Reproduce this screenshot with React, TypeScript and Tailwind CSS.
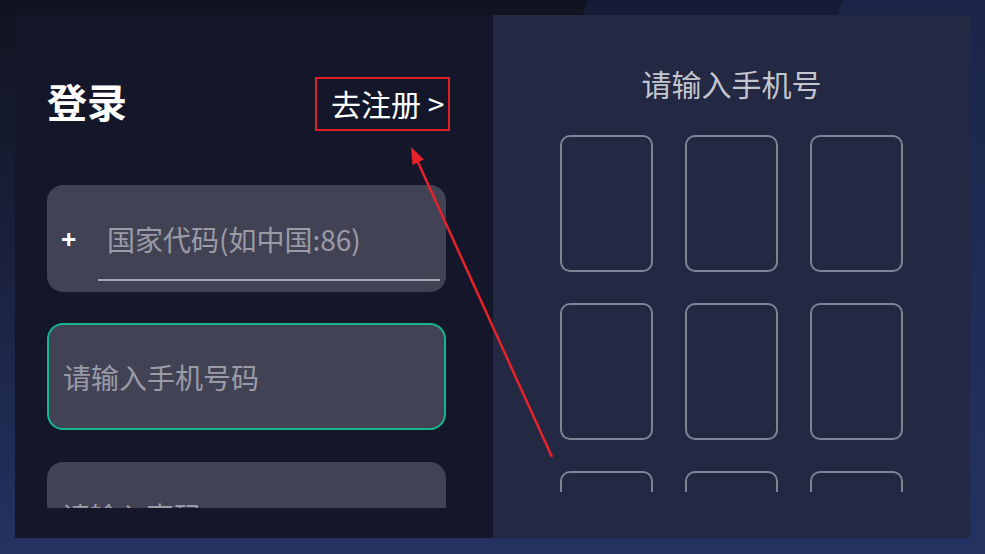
import React from "react";

export default function App() {
  const cards = Array.from({ length: 12 });
  return (
    <div className="relative w-[985px] h-[554px] overflow-hidden bg-[#243262] font-['Noto_Sans_CJK_SC','Noto_Sans',sans-serif]">
      {/* decorative background */}
      <div className="absolute inset-0 bg-linear-to-b from-[#10131f] to-[#243262]" />
      <div className="absolute inset-0 bg-linear-to-b from-[#161c35] to-[#243262] [clip-path:polygon(588px_0,985px_0,985px_554px,380px_554px)]" />
      <div className="absolute inset-0 bg-linear-to-b from-[#1b2548] to-[#243262] [clip-path:polygon(843px_0,985px_0,985px_554px,640px_554px)]" />

      <div className="relative flex pt-[15px] pl-[15px]">
        {/* left panel */}
        <div className="w-[478px] h-[523px] bg-[#131729]">
          <div className="h-[493px] overflow-hidden pl-[32px] pr-[47px] pt-[62px]">
            <div className="flex items-center justify-between h-[54px]">
              <div className="text-[40px] font-bold text-white leading-none mb-[6px]">登录</div>
              <div className="mr-[-4px] h-[54px] w-[135px] border-2 border-[#e0212a] flex items-center pl-[14px] pb-[3px] text-[30px] leading-none text-white">
                去注册 &gt;
              </div>
            </div>

            <div className="mt-[54px] h-[107px] rounded-[16px] bg-[#414354] flex items-center pl-[14px] pr-[6px]">
              <span className="w-[37px] text-[27px] font-bold text-white leading-none font-['Noto_Sans',sans-serif]">+</span>
              <div className="flex-1 h-[82px] self-end mb-[11px] border-b-2 border-[#a5a6ae] flex items-center pl-[9px] text-[28px] leading-none text-[#9a9ba6]">
                国家代码(如中国:86)
              </div>
            </div>

            <div className="mt-[31px] h-[107px] rounded-[16px] bg-[#414354] border-2 border-[#16b58e] flex items-center pl-[14px] text-[28px] leading-none text-[#9a9ba6]">
              请输入手机号码
            </div>

            <div className="mt-[32px] h-[107px] rounded-[16px] bg-[#414354] flex items-center pl-[15px] text-[28px] leading-none text-[#9a9ba6]">
              请输入密码
            </div>
          </div>
        </div>

        {/* right panel */}
        <div className="w-[477px] h-[523px] bg-[#232843]">
          <div className="h-[477px] overflow-hidden flex flex-col items-center pt-[48px]">
            <div className="text-[30px] leading-[40px] text-[#c4c6cf]">请输入手机号</div>
            <div className="mt-[32px] grid grid-cols-[93px_93px_93px] gap-x-[32px] gap-y-[31px]">
              {cards.map((_, i) => (
                <div key={i} className="h-[137px] rounded-[10px] border-2 border-[#7f8396]" />
              ))}
            </div>
          </div>
        </div>
      </div>

      {/* annotation arrow */}
      <svg className="absolute inset-0 pointer-events-none" width="985" height="554" viewBox="0 0 985 554">
        <line x1="552" y1="457" x2="417" y2="160" stroke="#e8222a" strokeWidth="2.5" />
        <polygon points="411,147 412.5,165 424,159.5" fill="#e8222a" />
      </svg>
    </div>
  );
}
